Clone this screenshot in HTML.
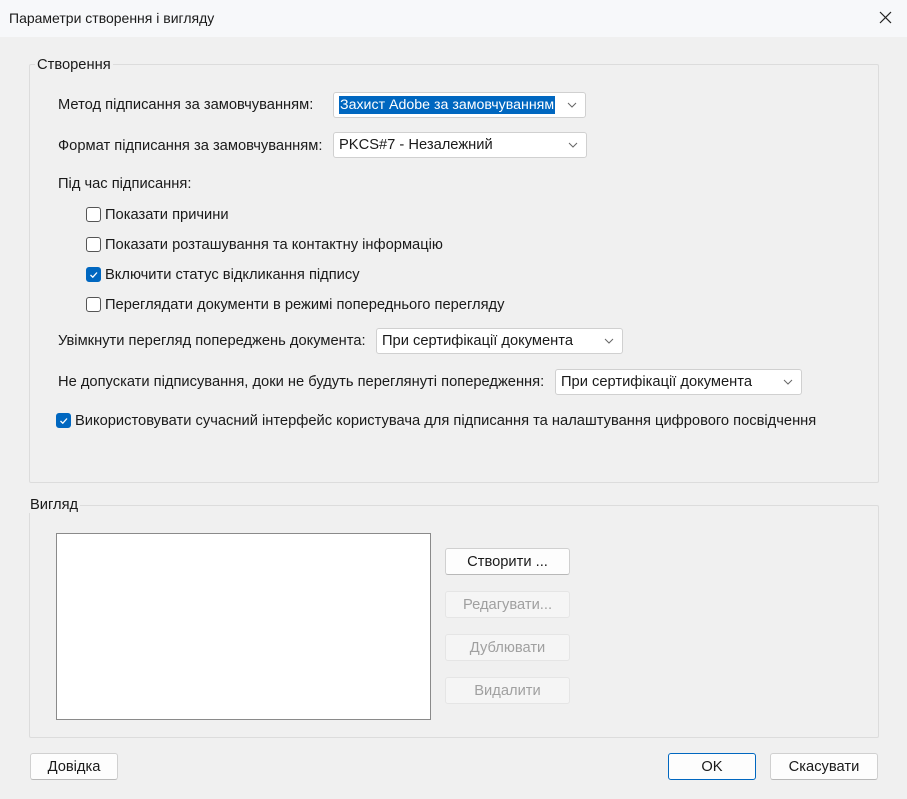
<!DOCTYPE html>
<html><head><meta charset="utf-8"><style>
*{box-sizing:border-box}
body{margin:0;width:907px;height:799px;background:#f0f0f0;font-family:"Liberation Sans",sans-serif;font-size:14.7px;color:#1a1a1a;position:relative;overflow:hidden}
.a{position:absolute;white-space:nowrap}
.tb{position:absolute;left:0;top:0;width:907px;height:37px;background:#f7f8fa}
.grp{position:absolute;border:1px solid #dcdcdc;border-radius:2px}
.gl{position:absolute;background:#f0f0f0;padding:0 2px}
.dd{position:absolute;height:26px;background:#fff;border:1px solid #d0d0d0;border-radius:3px;padding:0 0 0 5px;line-height:25px}
.dd svg{position:absolute;right:8px;top:9px}
.cb{position:absolute;width:15px;height:15px;border:1px solid #555;border-radius:3px;background:#fff}
.cb.on{background:#0067c0;border-color:#0067c0}
.btn{position:absolute;height:27px;background:#fdfdfd;border:1px solid #d0d0d0;border-bottom-color:#b8b8b8;border-radius:3px;text-align:center;line-height:26px}
.dis{color:#a0a0a0;background:#f5f5f5;border-color:#e5e5e5}
</style></head><body>
<div class="tb"></div>
<div class="a" style="left:9px;top:10px;font-size:14px">Параметри створення і вигляду</div>
<svg class="a" style="left:879px;top:11px" width="13" height="13"><path d="M1 1L12 12M12 1L1 12" stroke="#222" stroke-width="1.2"/></svg>

<div class="grp" style="left:29px;top:64px;width:850px;height:419px"></div>
<div class="gl" style="left:35px;top:57px">Створення</div>
<div class="a" style="left:58px;top:97px">Метод підписання за замовчуванням:</div>
<div class="dd" style="left:333px;top:92px;width:253px"><span style="background:#0067c0;color:#fff;padding:1px 1px;font-size:14.2px">Захист Adobe за замовчуванням</span><svg width="10" height="6"><path d="M1 1L5 5L9 1" fill="none" stroke="#666"/></svg></div>
<div class="a" style="left:58px;top:138px">Формат підписання за замовчуванням:</div>
<div class="dd" style="left:333px;top:132px;width:254px">PKCS#7 - Незалежний<svg width="10" height="6"><path d="M1 1L5 5L9 1" fill="none" stroke="#666"/></svg></div>
<div class="a" style="left:58px;top:176px">Під час підписання:</div>

<div class="cb" style="left:86px;top:207px"></div><div class="a" style="left:105px;top:207px">Показати причини</div>
<div class="cb" style="left:86px;top:237px"></div><div class="a" style="left:105px;top:237px">Показати розташування та контактну інформацію</div>
<div class="cb on" style="left:86px;top:267px"><svg width="13" height="13" style="position:absolute;left:0;top:0"><path d="M3.5 7L5.8 9.2L10 4.5" fill="none" stroke="#fff" stroke-width="1.3"/></svg></div><div class="a" style="left:105px;top:267px">Включити статус відкликання підпису</div>
<div class="cb" style="left:86px;top:297px"></div><div class="a" style="left:105px;top:297px">Переглядати документи в режимі попереднього перегляду</div>

<div class="a" style="left:58px;top:333px">Увімкнути перегляд попереджень документа:</div>
<div class="dd" style="left:376px;top:328px;width:247px">При сертифікації документа<svg width="10" height="6"><path d="M1 1L5 5L9 1" fill="none" stroke="#666"/></svg></div>
<div class="a" style="left:58px;top:374px">Не допускати підписування, доки не будуть переглянуті попередження:</div>
<div class="dd" style="left:555px;top:369px;width:247px">При сертифікації документа<svg width="10" height="6"><path d="M1 1L5 5L9 1" fill="none" stroke="#666"/></svg></div>
<div class="cb on" style="left:56px;top:413px"><svg width="13" height="13" style="position:absolute;left:0;top:0"><path d="M3.5 7L5.8 9.2L10 4.5" fill="none" stroke="#fff" stroke-width="1.3"/></svg></div><div class="a" style="left:75px;top:413px">Використовувати сучасний інтерфейс користувача для підписання та налаштування цифрового посвідчення</div>

<div class="grp" style="left:29px;top:505px;width:850px;height:233px"></div>
<div class="gl" style="left:28px;top:497px">Вигляд</div>
<div class="a" style="left:56px;top:533px;width:375px;height:187px;background:#fff;border:1px solid #8a8a8a"></div>
<div class="btn" style="left:445px;top:548px;width:125px">Створити ...</div>
<div class="btn dis" style="left:445px;top:591px;width:125px">Редагувати...</div>
<div class="btn dis" style="left:445px;top:634px;width:125px">Дублювати</div>
<div class="btn dis" style="left:445px;top:677px;width:125px">Видалити</div>

<div class="btn" style="left:30px;top:753px;width:88px">Довідка</div>
<div class="btn" style="left:668px;top:753px;width:88px;border-color:#0067c0">OK</div>
<div class="btn" style="left:770px;top:753px;width:108px">Скасувати</div>
</body></html>
